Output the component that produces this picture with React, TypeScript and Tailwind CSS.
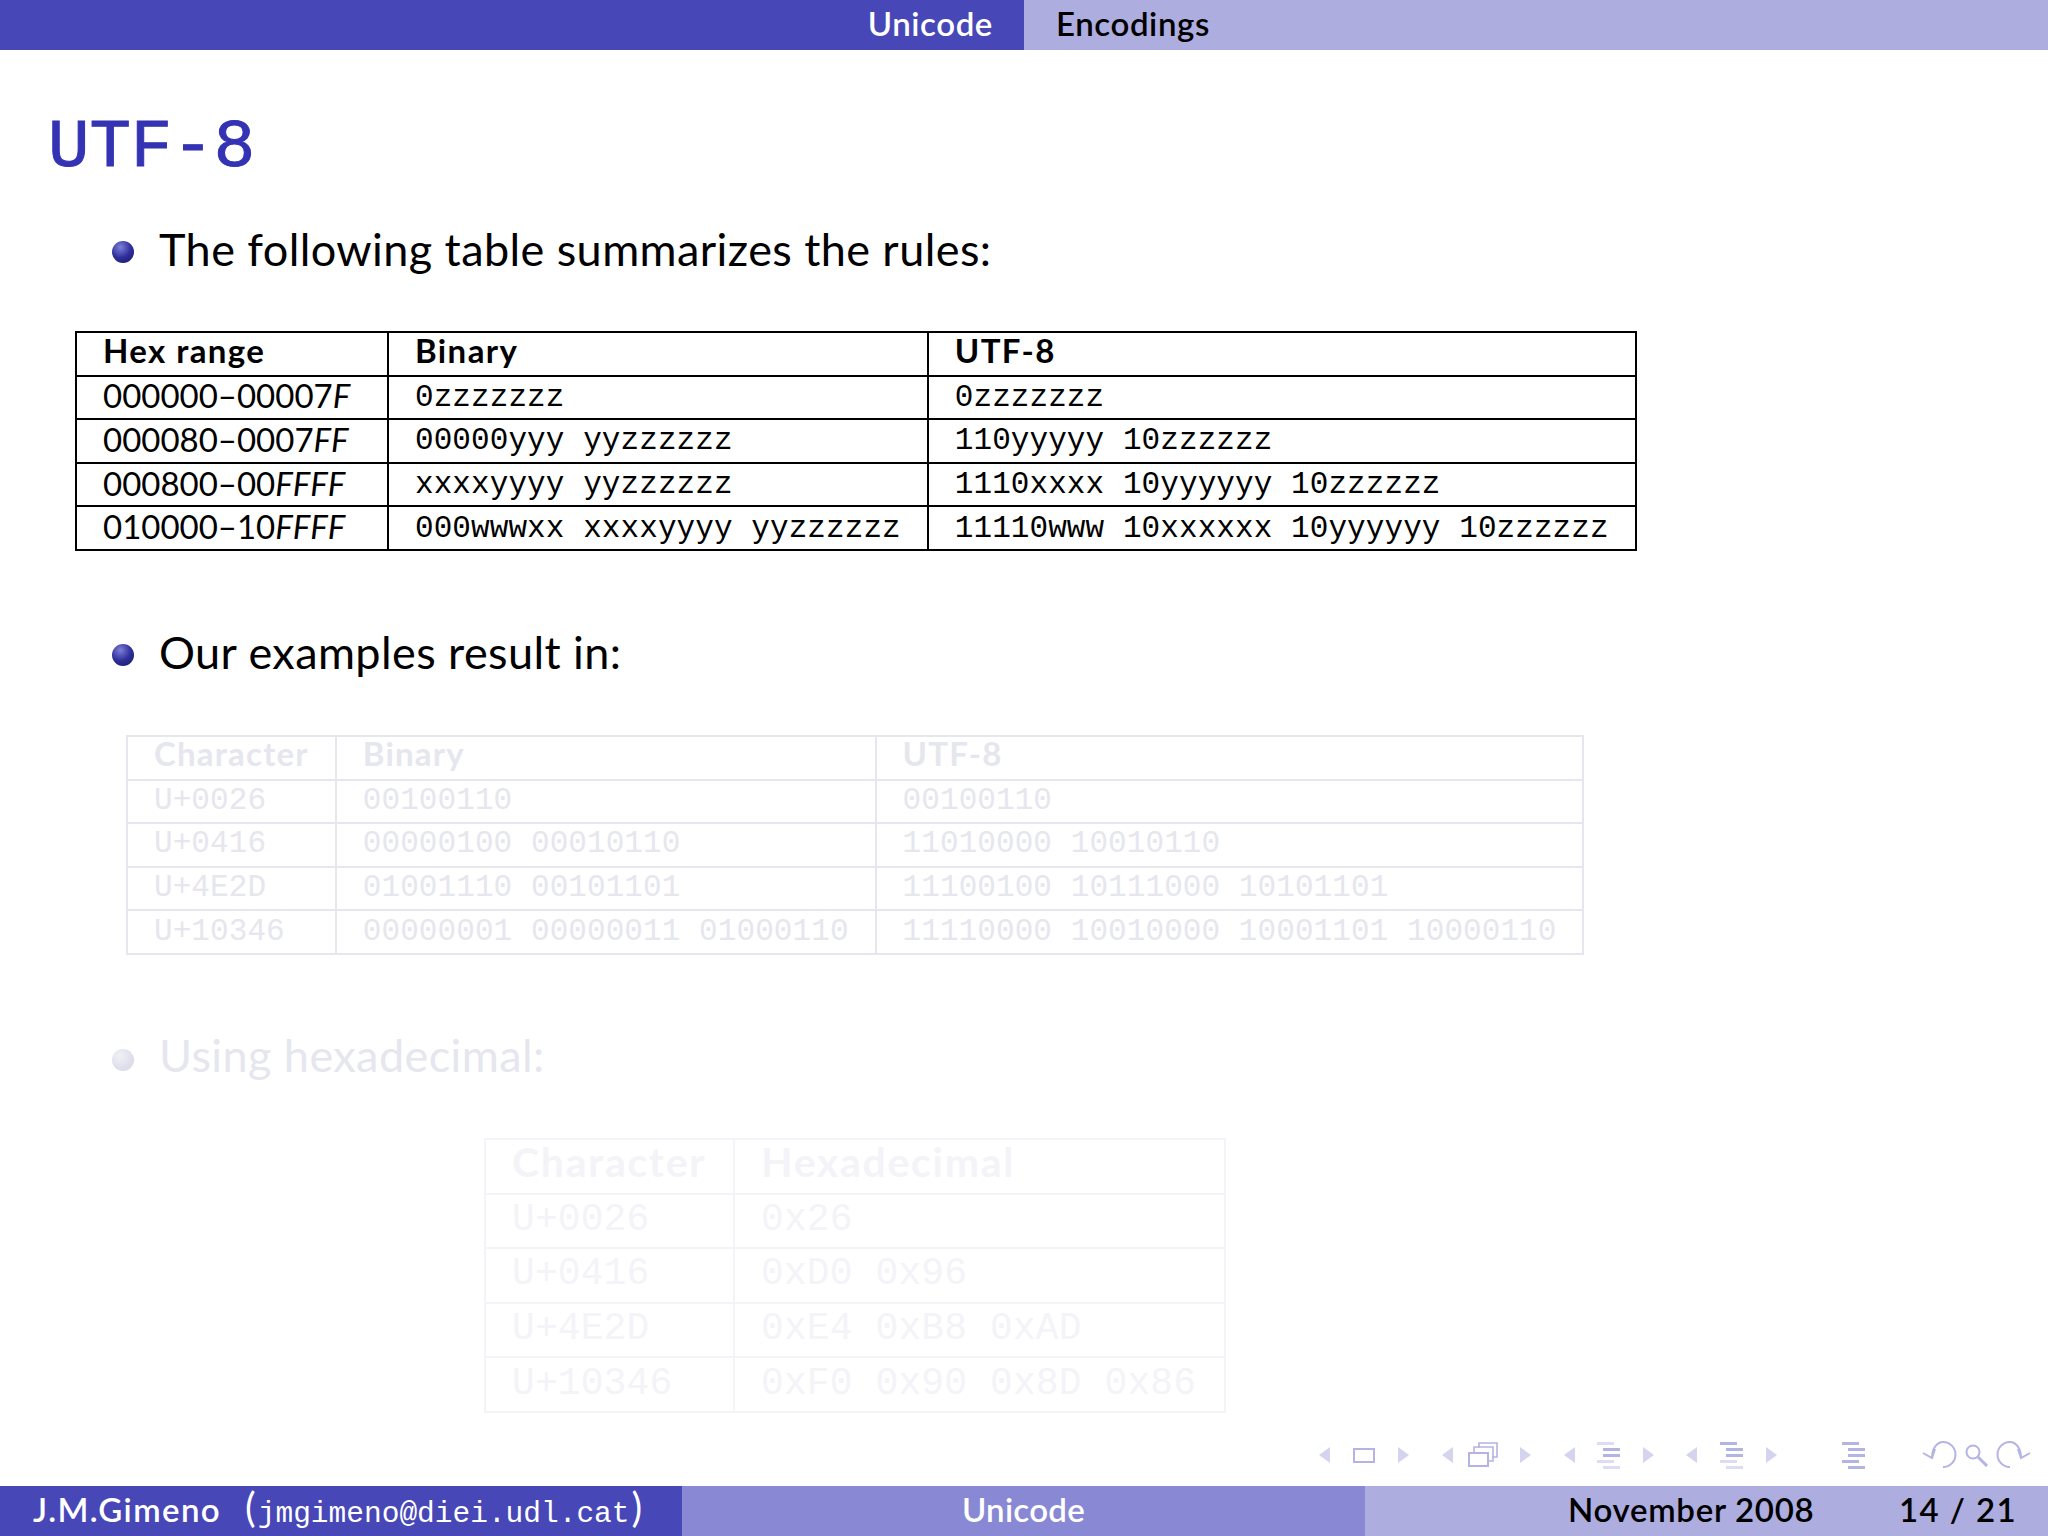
const sans = "font-['Lato','Open_Sans',sans-serif]";
const mono = "font-['Liberation_Mono',monospace]";

type Cell = React.ReactNode;

const rules: Cell[][] = [
  [<>000000–00007<i>F</i></>, "0zzzzzzz", "0zzzzzzz"],
  [<>000080–0007<i>FF</i></>, "00000yyy yyzzzzzz", "110yyyyy 10zzzzzz"],
  [<>000800–00<i>FFFF</i></>, "xxxxyyyy yyzzzzzz", "1110xxxx 10yyyyyy 10zzzzzz"],
  [<>010000–10<i>FFFF</i></>, "000wwwxx xxxxyyyy yyzzzzzz", "11110www 10xxxxxx 10yyyyyy 10zzzzzz"],
];

const examples: Cell[][] = [
  ["U+0026", "00100110", "00100110"],
  ["U+0416", "00000100 00010110", "11010000 10010110"],
  ["U+4E2D", "01001110 00101101", "11100100 10111000 10101101"],
  ["U+10346", "00000001 00000011 01000110", "11110000 10010000 10001101 10000110"],
];

const hex: Cell[][] = [
  ["U+0026", "0x26"],
  ["U+0416", "0xD0 0x96"],
  ["U+4E2D", "0xE4 0xB8 0xAD"],
  ["U+10346", "0xF0 0x90 0x8D 0x86"],
];

function Bullet({ faded, children }: { faded?: boolean; children: React.ReactNode }) {
  return (
    <div className={`flex h-[60px] items-center pl-[112px] ${faded ? "text-[#e6e6ee]" : "text-black"}`}>
      <span
        className={`mr-[25px] h-[22px] w-[22px] rounded-full ${
          faded
            ? "bg-[radial-gradient(circle_at_35%_30%,#f0f0f6,#dcdcea_70%)]"
            : "bg-[radial-gradient(circle_at_38%_28%,#7f7fd8,#2f2f9c_50%,#16165e)]"
        }`}
      />
      <span className={`${sans} ${faded ? "mb-[8px]" : "mb-[5px]"} text-[45px] tracking-[0.42px] whitespace-nowrap`}>
        {children}
      </span>
    </div>
  );
}

function NavIcons() {
  const c = "#b4b4e4";
  const light = "#dcdcf2";
  const tri = (x: number, dir: 1 | -1) => (
    <path d={dir < 0 ? `M${x + 11} 27 L${x} 35 L${x + 11} 43 Z` : `M${x} 27 L${x + 11} 35 L${x} 43 Z`} fill="#d4d4ef" />
  );
  const lines = (x: number, dark: boolean[]) =>
    [22, 28, 34, 40, 46].map((y, i) => (
      <rect key={y} x={i === 0 || i === 3 ? x : x + 6} y={y} width="17" height="3" fill={dark[i] ? c : light} />
    ));
  return (
    <svg viewBox="0 0 748 60" className="h-[60px] w-[748px]" fill="none">
      {tri(19, -1)}
      <rect x="54" y="29" width="20" height="13" stroke={c} strokeWidth="2" />
      {tri(98, 1)}
      {tri(142, -1)}
      <path d="M179 28 V23 H197 V37 H192 M174 32 V27 H193 V41 H189" stroke={c} strokeWidth="1.6" />
      <rect x="169" y="33" width="19" height="13" stroke={c} strokeWidth="2" fill="#fff" />
      {tri(220, 1)}
      {tri(264, -1)}
      {lines(297, [false, true, true, false, false])}
      {tri(343, 1)}
      {tri(386, -1)}
      {lines(420, [true, true, true, false, false])}
      {tri(466, 1)}
      {lines(542, [true, true, true, true, true])}
      <path d="M632 38 C632 27 638 22 643 22 A12.5 12.5 0 0 1 643 47 M623 33 L632 38 L635 29" stroke={c} strokeWidth="2" />
      <circle cx="673" cy="32" r="6.5" stroke={c} strokeWidth="2" />
      <path d="M678 37 L687 46" stroke={c} strokeWidth="3" />
      <path d="M721 38 C721 27 715 22 710 22 A12.5 12.5 0 0 0 710 47 M730 33 L721 38 L718 29" stroke={c} strokeWidth="2" />
    </svg>
  );
}

function DataTable({
  head,
  rows,
  widths,
  rowH,
  headFont,
  bodyFont,
}: {
  head: string[];
  rows: Cell[][];
  widths: string[];
  rowH: string;
  headFont: string;
  bodyFont: string;
}) {
  return (
    <table className="table-fixed border-collapse">
      <tbody>
        <tr className={rowH}>
          {head.map((h, i) => (
            <th key={h} className={`${widths[i]} ${headFont} ${sans} border-2 border-current px-[26px] text-left font-bold`}>
              {h}
            </th>
          ))}
        </tr>
        {rows.map((r, i) => (
          <tr key={i} className={rowH}>
            {r.map((c, j) => {
              const plain = typeof c === "string";
              return (
                <td
                  key={j}
                  className={`border-2 border-current px-[26px] font-normal whitespace-pre ${
                    plain ? `${mono} ${bodyFont}` : `${sans} pb-[3px] text-[33px]`
                  }`}
                >
                  {c}
                </td>
              );
            })}
          </tr>
        ))}
      </tbody>
    </table>
  );
}

export default function App() {
  return (
    <div className="flex h-[1536px] w-[2048px] flex-col overflow-hidden bg-white">
      <header className={`flex h-[50px] shrink-0 text-[33px] leading-[46px] font-semibold tracking-[0.6px] ${sans}`}>
        <div className="flex w-[1024px] justify-end bg-[#4747b8] pr-[31px] text-white">Unicode</div>
        <div className="flex-1 bg-[#adade0] pl-[32px] text-black">Encodings</div>
      </header>

      <h1 className={`${mono} mt-[58px] ml-[48px] text-[69px] leading-[80px] text-[#3333b3] [-webkit-text-stroke:1px_#3333b3]`}>
        UTF-8
      </h1>

      <div className="mt-[34px]">
        <Bullet>The following table summarizes the rules:</Bullet>
      </div>
      <div className="mt-[49px] ml-[75px] leading-none text-black">
        <DataTable
          head={["Hex range", "Binary", "UTF-8"]}
          rows={rules}
          widths={["w-[312px]", "w-[539px]", "w-[707px]"]}
          rowH="h-[43.6px]"
          headFont="pb-[7px] text-[33px] tracking-[1.4px]"
          bodyFont="text-[31px] tracking-[0.08px]"
        />
      </div>

      <div className="mt-[74px]">
        <Bullet>Our examples result in:</Bullet>
      </div>
      <div className="mt-[50px] ml-[126px] leading-none text-[#e6e6ee]">
        <DataTable
          head={["Character", "Binary", "UTF-8"]}
          rows={examples}
          widths={["w-[207px]", "w-[539px]", "w-[707px]"]}
          rowH="h-[43.6px]"
          headFont="pb-[8px] text-[33px] tracking-[1.2px]"
          bodyFont="pb-[2px] text-[31px] tracking-[0.08px]"
        />
      </div>

      <div className="mt-[75px]">
        <Bullet faded>Using hexadecimal:</Bullet>
      </div>
      <div className="mt-[48px] ml-[484px] leading-none text-[#f4f3f8]">
        <DataTable
          head={["Character", "Hexadecimal"]}
          rows={hex}
          widths={["w-[249px]", "w-[491px]"]}
          rowH="h-[54.6px]"
          headFont="pb-[9px] text-[41px] tracking-[1.7px]"
          bodyFont="pb-[2px] text-[38px] tracking-[0.1px]"
        />
      </div>

      <div className="mt-auto mb-[6px] flex justify-end">
        <NavIcons />
      </div>
      <footer className="flex h-[50px] shrink-0 text-[33px] leading-[47px] font-semibold">
        <div className={`w-[682px] bg-[#4747b8] pl-[33px] whitespace-pre text-white ${sans}`}>
          <span className="tracking-[1.4px]">J.M.Gimeno</span>
          <span className="ml-[24px] text-[40px] leading-none font-normal">(</span>
          <span className={`${mono} ml-[2px] text-[29.5px] font-normal`}>jmgimeno@diei.udl.cat</span>
          <span className="ml-[2px] text-[40px] leading-none font-normal">)</span>
        </div>
        <div className={`w-[683px] bg-[#8888d4] text-center tracking-[0.3px] text-white ${sans}`}>Unicode</div>
        <div className={`flex flex-1 justify-between bg-[#adade0] pr-[31px] pl-[203px] text-black ${sans}`}>
          <span className="tracking-[0.7px]">November 2008</span>
          <span className="tracking-[1.4px]">14 / 21</span>
        </div>
      </footer>
    </div>
  );
}
